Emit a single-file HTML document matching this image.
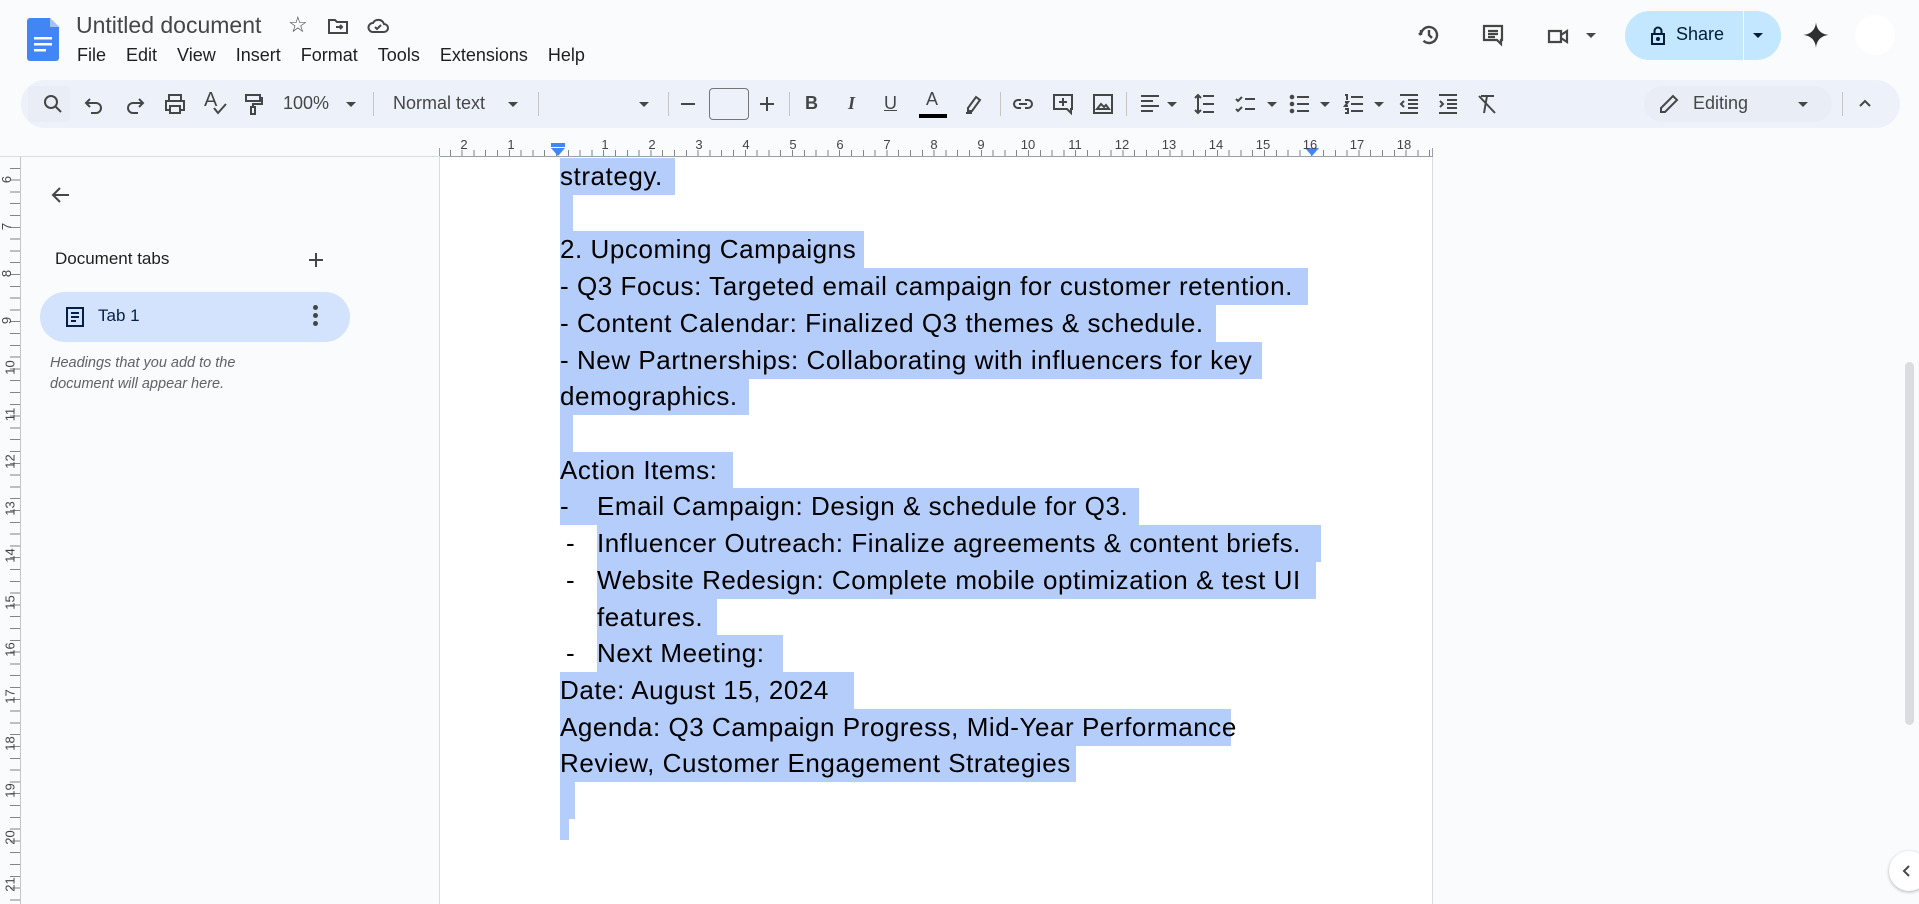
<!DOCTYPE html>
<html><head><meta charset="utf-8">
<style>
*{margin:0;padding:0;box-sizing:border-box}
body{width:1919px;height:904px;overflow:hidden;background:#f9fbfd;font-family:"Liberation Sans",Arial,sans-serif;color:#1f1f1f;position:relative}
.a{position:absolute}
.ic{position:absolute;width:24px;height:24px;fill:none;stroke:#444746;stroke-width:2}
.menu span{margin-right:20px}
.tb{position:absolute;left:21px;top:80px;width:1879px;height:48px;background:#edf2fa;border-radius:24px}
.sep{position:absolute;top:92px;width:1px;height:24px;background:#c4c7c5}
.tt{position:absolute;top:93px;font-size:18px;color:#444746}
.arr{position:absolute;width:0;height:0;border-left:5px solid transparent;border-right:5px solid transparent;border-top:5px solid #444746}
.hl{position:absolute;background:#b5cdfb;height:37px}
.tx{position:absolute;font-size:26px;letter-spacing:0.55px;color:#000;white-space:pre;line-height:37px}
.rn{position:absolute;top:137px;font-size:13px;color:#444;transform:translateX(-50%)}
.vn{position:absolute;left:3px;font-size:13px;color:#444;transform:rotate(-90deg)}
</style></head><body>
<svg class="a" style="left:27px;top:18px" width="32" height="43" viewBox="0 0 32 43"><path d="M3 0h20l9 9v31a3 3 0 0 1-3 3H3a3 3 0 0 1-3-3V3a3 3 0 0 1 3-3z" fill="#4285f4"/><path d="M23 0v9h9z" fill="#a1c2fa"/><rect x="7" y="19" width="18" height="2.5" fill="#fff"/><rect x="7" y="25" width="18" height="2.5" fill="#fff"/><rect x="7" y="31" width="12" height="2.5" fill="#fff"/></svg>
<div class="a" style="left:76px;top:12px;font-size:23px;color:#444746">Untitled document</div>
<div class="a" style="left:288px;top:12px;font-size:22px;color:#444746">☆</div>
<svg class="ic" style="left:326px;top:14px" viewBox="0 0 24 24"><path d="M3 6h6l2 2h10v11H3z M10 13h6 M14 11l2 2-2 2"/></svg>
<svg class="ic" style="left:366px;top:14px" viewBox="0 0 24 24"><path d="M7 18h11a4 4 0 0 0 0-8 6 6 0 0 0-11-1 4.5 4.5 0 0 0 0 9z M9 13l2 2 4-4"/></svg>
<div class="a menu" style="left:77px;top:45px;font-size:18px;color:#1f1f1f"><span>File</span><span>Edit</span><span>View</span><span>Insert</span><span>Format</span><span>Tools</span><span>Extensions</span><span>Help</span></div>
<svg class="ic" style="left:1417px;top:23px;stroke-width:2.4" viewBox="0 0 24 24"><path d="M4 12a8 8 0 1 1 2.5 5.8 M4 12V7 M4 12l-2-2 M12 7v5l3 3"/></svg>
<svg class="ic" style="left:1481px;top:23px;stroke-width:2.2" viewBox="0 0 24 24"><path d="M3 3h18v14h-1v4l-4-4H3z M7 8h10 M7 11h10 M7 14h7"/></svg>
<svg class="ic" style="left:1546px;top:24px;stroke-width:2.2" viewBox="0 0 24 24"><path d="M3 7h12v11H3z M15 11l6-4v11l-6-4"/></svg>
<div class="arr" style="left:1586px;top:33px"></div>
<div class="a" style="left:1625px;top:11px;width:156px;height:49px;border-radius:25px;background:#c2e7ff"></div>
<div class="a" style="left:1743px;top:11px;width:1px;height:49px;background:#f9fbfd"></div>
<svg class="ic" style="left:1646px;top:23px;stroke:#001d35" viewBox="0 0 24 24"><path d="M6 11h12v10H6z M8.5 11V8a3.5 3.5 0 0 1 7 0v3"/><circle cx="12" cy="16" r="1" fill="#001d35"/></svg>
<div class="a" style="left:1676px;top:24px;font-size:18px;color:#001d35">Share</div>
<div class="arr" style="left:1753px;top:33px;border-top-color:#001d35"></div>
<svg class="a" style="left:1802px;top:21px" width="28" height="28" viewBox="0 0 24 24"><path d="M12 1C12.5 7.5 16.5 11.5 23 12 16.5 12.5 12.5 16.5 12 23 11.5 16.5 7.5 12.5 1 12 7.5 11.5 11.5 7.5 12 1z" fill="#2d2f31"/></svg>
<div class="a" style="left:1855px;top:15px;width:40px;height:40px;border-radius:50%;background:#fff"></div>
<div class="tb"></div>
<div class="a" style="left:28px;top:86px;width:42px;height:36px;border-radius:4px;background:#e9eef6"></div>
<svg class="ic" style="left:41px;top:92px" viewBox="0 0 24 24"><circle cx="10" cy="10" r="6"/><path d="M14.5 14.5L20 20"/></svg>
<svg class="ic" style="left:82px;top:93px" viewBox="0 0 24 24"><path d="M8 6L4 10l4 4 M4 10h10a5 5 0 0 1 0 10H9"/></svg>
<svg class="ic" style="left:123px;top:93px" viewBox="0 0 24 24"><path d="M16 6l4 4-4 4 M20 10H10a5 5 0 0 0 0 10h5"/></svg>
<svg class="ic" style="left:163px;top:92px" viewBox="0 0 24 24"><path d="M6 9V3h12v6 M6 18H3v-9h18v9h-3 M7 14h10v7H7z"/></svg>
<div class="tt" style="left:204px;top:89px;font-size:20px">A</div><svg class="ic" style="left:208px;top:96px" viewBox="0 0 24 24"><path d="M6 12l4 5 8-9"/></svg>
<svg class="ic" style="left:241px;top:92px" viewBox="0 0 24 24"><path d="M5 3h14v6H5z M19 6h2v6h-9v3 M10 15h4v7h-4z"/></svg>
<div class="tt" style="left:283px">100%</div><div class="arr" style="left:346px;top:102px"></div>
<div class="sep" style="left:373px"></div>
<div class="tt" style="left:393px">Normal text</div><div class="arr" style="left:508px;top:102px"></div>
<div class="sep" style="left:538px"></div>
<div class="arr" style="left:639px;top:102px"></div>
<div class="sep" style="left:668px"></div>
<div class="a" style="left:681px;top:103px;width:14px;height:2px;background:#444746"></div>
<div class="a" style="left:709px;top:88px;width:40px;height:32px;border:1px solid #747775;border-radius:4px"></div>
<div class="a" style="left:760px;top:103px;width:14px;height:2px;background:#444746"></div><div class="a" style="left:766px;top:97px;width:2px;height:14px;background:#444746"></div>
<div class="sep" style="left:789px"></div>
<div class="tt" style="left:805px;font-weight:bold">B</div>
<div class="tt" style="left:848px;font-style:italic;font-family:'Liberation Serif',serif;font-weight:bold">I</div>
<div class="tt" style="left:884px;text-decoration:underline">U</div>
<div class="tt" style="left:926px;top:89px">A</div><div class="a" style="left:919px;top:114px;width:28px;height:4px;background:#000"></div>
<svg class="ic" style="left:962px;top:92px" viewBox="0 0 24 24"><path d="M6 16l8-11 4 3-8 11H6z M4 21h6"/></svg>
<div class="sep" style="left:1000px"></div>
<svg class="ic" style="left:1011px;top:92px" viewBox="0 0 24 24"><path d="M10 8H7a4 4 0 0 0 0 8h3 M14 8h3a4 4 0 0 1 0 8h-3 M8 12h8"/></svg>
<svg class="ic" style="left:1051px;top:92px" viewBox="0 0 24 24"><path d="M3 3h18v14h-1v4l-4-4H3z M12 6v8 M8 10h8"/></svg>
<svg class="ic" style="left:1091px;top:92px" viewBox="0 0 24 24"><path d="M3 3h18v18H3z M6 17l4-5 3 3 2-2 3 4z"/></svg>
<div class="sep" style="left:1126px"></div>
<svg class="ic" style="left:1138px;top:92px" viewBox="0 0 24 24"><path d="M3 4h18 M3 9h12 M3 14h18 M3 19h12"/></svg><div class="arr" style="left:1167px;top:102px"></div>
<svg class="ic" style="left:1193px;top:92px" viewBox="0 0 24 24"><path d="M10 4h11 M10 12h11 M10 20h11 M5 3v18 M2 6l3-3 3 3 M2 18l3 3 3-3"/></svg>
<svg class="ic" style="left:1234px;top:92px" viewBox="0 0 24 24"><path d="M2 7l2 2 4-4 M2 17l2 2 4-4 M11 7h10 M11 17h10"/></svg><div class="arr" style="left:1267px;top:102px"></div>
<svg class="ic" style="left:1288px;top:92px" viewBox="0 0 24 24"><path d="M9 5h12 M9 12h12 M9 19h12"/><circle cx="4" cy="5" r="1.3" fill="#444746"/><circle cx="4" cy="12" r="1.3" fill="#444746"/><circle cx="4" cy="19" r="1.3" fill="#444746"/></svg><div class="arr" style="left:1320px;top:102px"></div>
<svg class="ic" style="left:1342px;top:92px" viewBox="0 0 24 24"><path d="M9 5h12 M9 12h12 M9 19h12 M3 3h2v5 M3 10h3l-3 4h3 M3 17h3v4H3"/></svg><div class="arr" style="left:1374px;top:102px"></div>
<svg class="ic" style="left:1397px;top:92px" viewBox="0 0 24 24"><path d="M3 3h18 M11 8h10 M11 12h10 M11 16h10 M3 21h18 M7 9l-3 3 3 3"/></svg>
<svg class="ic" style="left:1436px;top:92px" viewBox="0 0 24 24"><path d="M3 3h18 M11 8h10 M11 12h10 M11 16h10 M3 21h18 M4 9l3 3-3 3"/></svg>
<svg class="ic" style="left:1475px;top:92px" viewBox="0 0 24 24"><path d="M6 4h13 M12 4l-3 17 M4 4l16 17"/></svg>
<div class="a" style="left:1644px;top:86px;width:188px;height:36px;border-radius:18px;background:#e9eef6"></div>
<svg class="ic" style="left:1657px;top:92px" viewBox="0 0 24 24"><path d="M4 20v-4L16 4l4 4L8 20z"/></svg>
<div class="tt" style="left:1693px">Editing</div><div class="arr" style="left:1798px;top:102px"></div>
<div class="sep" style="left:1842px"></div>
<svg class="ic" style="left:1853px;top:92px" viewBox="0 0 24 24"><path d="M7 14l5-5 5 5"/></svg>
<div class="a" style="left:439px;top:156px;width:994px;height:1px;background:#9aa0a6"></div>
<div class="a" style="left:439px;top:148px;width:1px;height:9px;background:#9aa0a6"></div>
<div class="a" style="left:1432px;top:148px;width:1px;height:9px;background:#9aa0a6"></div>
<div class="a" style="left:439px;top:150px;width:994px;height:6px;background:repeating-linear-gradient(90deg,transparent 0,transparent 10.8px,#80868b 10.8px,#80868b 11.8px)"></div>
<div class="a" style="left:551px;top:143px;width:14px;height:4px;background:#4285f4"></div>
<div class="a" style="left:551px;top:148px;border-left:7px solid transparent;border-right:7px solid transparent;border-top:8px solid #4285f4"></div>
<div class="a" style="left:1305px;top:148px;border-left:7px solid transparent;border-right:7px solid transparent;border-top:8px solid #4285f4"></div>
<div class="rn" style="left:464px">2</div><div class="rn" style="left:511px">1</div>
<div class="rn" style="left:605px">1</div><div class="rn" style="left:652px">2</div><div class="rn" style="left:699px">3</div><div class="rn" style="left:746px">4</div><div class="rn" style="left:793px">5</div><div class="rn" style="left:840px">6</div><div class="rn" style="left:887px">7</div><div class="rn" style="left:934px">8</div><div class="rn" style="left:981px">9</div><div class="rn" style="left:1028px">10</div><div class="rn" style="left:1075px">11</div><div class="rn" style="left:1122px">12</div><div class="rn" style="left:1169px">13</div><div class="rn" style="left:1216px">14</div><div class="rn" style="left:1263px">15</div><div class="rn" style="left:1310px">16</div><div class="rn" style="left:1357px">17</div><div class="rn" style="left:1404px">18</div>
<div class="a" style="left:20px;top:157px;width:1px;height:747px;background:#c4c7c5"></div>
<div class="a" style="left:10px;top:157px;width:10px;height:747px;background:repeating-linear-gradient(180deg,transparent 0,transparent 10.8px,#80868b 10.8px,#80868b 11.8px)"></div>
<div class="a" style="left:0;top:156px;width:440px;height:1px;background:#dadce0"></div>
<div class="vn" style="top:172px">6</div><div class="vn" style="top:219px">7</div><div class="vn" style="top:266px">8</div><div class="vn" style="top:313px">9</div><div class="vn" style="top:360px">10</div><div class="vn" style="top:407px">11</div><div class="vn" style="top:454px">12</div><div class="vn" style="top:501px">13</div><div class="vn" style="top:548px">14</div><div class="vn" style="top:595px">15</div><div class="vn" style="top:642px">16</div><div class="vn" style="top:689px">17</div><div class="vn" style="top:736px">18</div><div class="vn" style="top:783px">19</div><div class="vn" style="top:830px">20</div><div class="vn" style="top:877px">21</div>
<svg class="ic" style="left:49px;top:183px" viewBox="0 0 24 24"><path d="M20 12H4 M11 5l-7 7 7 7"/></svg>
<div class="a" style="left:55px;top:249px;font-size:17px;color:#1f1f1f">Document tabs</div>
<svg class="ic" style="left:304px;top:248px" viewBox="0 0 24 24"><path d="M12 5v14 M5 12h14"/></svg>
<div class="a" style="left:40px;top:292px;width:310px;height:50px;border-radius:25px;background:#d3e3fd"></div>
<svg class="ic" style="left:63px;top:305px;stroke:#041e49" viewBox="0 0 24 24"><path d="M4 3h16v18H4z M8 8h8 M8 12h8 M8 16h5"/></svg>
<div class="a" style="left:98px;top:306px;font-size:17px;color:#041e49">Tab 1</div>
<div class="a" style="left:313px;top:305px;width:5px;height:5px;border-radius:50%;background:#444746;box-shadow:0 8px 0 #444746,0 16px 0 #444746"></div>
<div class="a" style="left:50px;top:353px;font-size:14.5px;font-style:italic;color:#5f6368;line-height:21px">Headings that you add to the<br>document will appear here.</div>
<div class="a" style="left:439px;top:157px;width:994px;height:747px;background:#fff;border-left:1px solid #dadce0;border-right:1px solid #dadce0"></div>
<div class="hl" style="left:560px;top:158px;width:115px"></div>
<div class="hl" style="left:560px;top:195px;width:13px"></div>
<div class="hl" style="left:560px;top:231px;width:304px"></div>
<div class="hl" style="left:560px;top:268px;width:748px"></div>
<div class="hl" style="left:560px;top:305px;width:656px"></div>
<div class="hl" style="left:560px;top:342px;width:702px"></div>
<div class="hl" style="left:560px;top:378px;width:189px"></div>
<div class="hl" style="left:560px;top:415px;width:13px"></div>
<div class="hl" style="left:560px;top:452px;width:173px"></div>
<div class="hl" style="left:560px;top:488px;width:579px"></div>
<div class="hl" style="left:597px;top:525px;width:724px"></div>
<div class="hl" style="left:597px;top:562px;width:719px"></div>
<div class="hl" style="left:597px;top:599px;width:120px"></div>
<div class="hl" style="left:597px;top:635px;width:186px"></div>
<div class="hl" style="left:560px;top:672px;width:294px"></div>
<div class="hl" style="left:560px;top:709px;width:671px"></div>
<div class="hl" style="left:560px;top:745px;width:516px"></div>
<div class="hl" style="left:560px;top:782px;width:15px"></div>
<div class="hl" style="left:560px;top:819px;width:9px;height:21px"></div>
<div class="tx" style="left:560px;top:158px">strategy.</div>
<div class="tx" style="left:560px;top:231px">2. Upcoming Campaigns</div>
<div class="tx" style="left:560px;top:268px">- Q3 Focus: Targeted email campaign for customer retention.</div>
<div class="tx" style="left:560px;top:305px">- Content Calendar: Finalized Q3 themes &amp; schedule.</div>
<div class="tx" style="left:560px;top:342px">- New Partnerships: Collaborating with influencers for key</div>
<div class="tx" style="left:560px;top:378px">demographics.</div>
<div class="tx" style="left:560px;top:452px">Action Items:</div>
<div class="tx" style="left:560px;top:488px">-</div><div class="tx" style="left:597px;top:488px">Email Campaign: Design &amp; schedule for Q3.</div>
<div class="tx" style="left:566px;top:525px">-</div><div class="tx" style="left:597px;top:525px">Influencer Outreach: Finalize agreements &amp; content briefs.</div>
<div class="tx" style="left:566px;top:562px">-</div><div class="tx" style="left:597px;top:562px">Website Redesign: Complete mobile optimization &amp; test UI</div>
<div class="tx" style="left:597px;top:599px">features.</div>
<div class="tx" style="left:566px;top:635px">-</div><div class="tx" style="left:597px;top:635px">Next Meeting:</div>
<div class="tx" style="left:560px;top:672px">Date: August 15, 2024</div>
<div class="tx" style="left:560px;top:709px">Agenda: Q3 Campaign Progress, Mid-Year Performance</div>
<div class="tx" style="left:560px;top:745px">Review, Customer Engagement Strategies</div>
<div class="a" style="left:1905px;top:362px;width:9px;height:363px;border-radius:5px;background:#dadce0"></div>
<div class="a" style="left:1889px;top:851px;width:40px;height:40px;border-radius:50%;background:#fff;box-shadow:0 1px 3px rgba(0,0,0,.3)"></div>
<svg class="ic" style="left:1895px;top:859px" viewBox="0 0 24 24"><path d="M14 7l-5 5 5 5"/></svg>
</body></html>
